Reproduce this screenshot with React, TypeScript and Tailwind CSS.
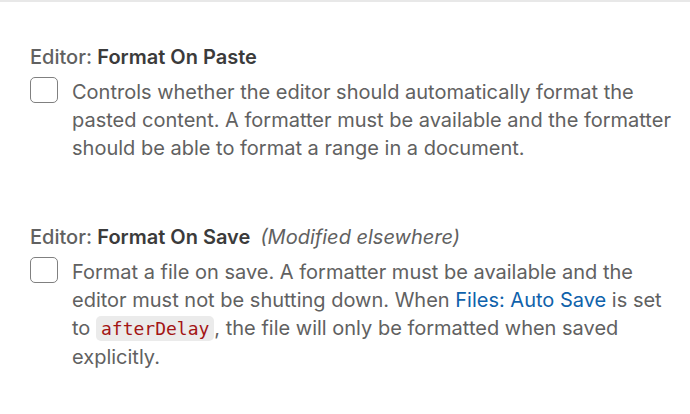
export default function App() {
  return (
    <div className="w-[690px] h-[414px] bg-white border-t-2 border-[#e8e8e8] overflow-hidden font-['Inter',sans-serif] text-[#616161]">
      <div className="pl-[30px] pr-[14px] pt-[43px] flex flex-col gap-[63px]">
        <div>
          <div className="text-[20px] leading-[24px] font-medium">
            Editor: <span className="font-semibold text-[#3b3b3b]">Format On Paste</span>
          </div>
          <div className="mt-[9px] flex gap-[14px]">
            <div className="-mt-[1px] w-[28px] h-[26px] shrink-0 rounded-[5px] border-[1.5px] border-[#808080]" />
            <p className="text-[20px] leading-[28px]">
              Controls whether the editor should automatically format the pasted content. A formatter must be available and the
              formatter should be able to format a range in a document.
            </p>
          </div>
        </div>
        <div>
          <div className="text-[20px] leading-[24px] font-medium">
            Editor: <span className="font-semibold text-[#3b3b3b]">Format On Save</span>
            <span className="italic font-normal ml-[10px]">(Modified elsewhere)</span>
          </div>
          <div className="mt-[9px] flex gap-[14px]">
            <div className="-mt-[1px] w-[28px] h-[26px] shrink-0 rounded-[5px] border-[1.5px] border-[#808080]" />
            <p className="text-[20px] leading-[28px]">
              Format a file on save. A formatter must be available and the editor must not be shutting down. When{' '}
              <span className="text-[#0f62ab]">Files: Auto Save</span> is set to{' '}
              <code className="font-['DejaVu_Sans_Mono',monospace] text-[18px] text-[#a31515] bg-[#ebebeb] rounded-[5px] px-[5px] py-[2px]">
                afterDelay
              </code>
              , the file will only be formatted when saved explicitly.
            </p>
          </div>
        </div>
      </div>
    </div>
  )
}
